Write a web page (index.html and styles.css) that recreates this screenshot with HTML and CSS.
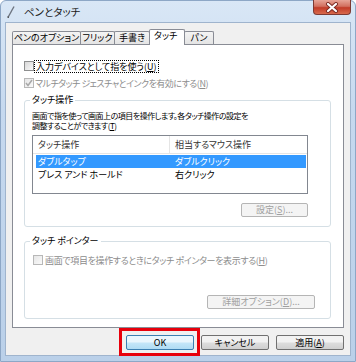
FILE: index.html
```html
<!DOCTYPE html>
<html lang="ja">
<head>
  <meta charset="UTF-8">
  <title>ペンとタッチ</title>
  <link rel="stylesheet" href="styles.css">
</head>
<body>
  <div class="window">
    <div class="titlebar">
      <svg class="pen-icon" width="8" height="12" viewBox="0 0 8 12">
        <path d="M7 0.5 L1.5 10.5" stroke="#6d7480" stroke-width="1.4" fill="none"/>
        <path d="M1.5 10.5 L0.8 11.6" stroke="#222" stroke-width="1.4" fill="none"/>
      </svg>
      <span class="title">ペンとタッチ</span>
      <div class="close-btn">
        <svg width="14" height="11" viewBox="0 0 14 11">
          <path d="M3 2 L11 9 M11 2 L3 9" stroke="#7a2a22" stroke-width="4" stroke-linecap="round"/>
          <path d="M3 2 L11 9 M11 2 L3 9" stroke="#fff" stroke-width="2.2" stroke-linecap="round"/>
        </svg>
      </div>
    </div>

    <div class="client">
      <div class="tabs">
        <div class="tab tab-options">ペンのオプション</div>
        <div class="tab tab-flick">フリック</div>
        <div class="tab tab-hand">手書き</div>
        <div class="tab tab-touch active">タッチ</div>
        <div class="tab tab-pan">パン</div>
      </div>

      <div class="panel">
        <div class="check-row">
          <span class="checkbox"></span>
          <span class="focus-label">入力デバイスとして指を使う(<u>U</u>)</span>
        </div>
        <div class="check-row disabled multi">
          <span class="checkbox checked">
            <svg width="8" height="8" viewBox="0 0 8 8"><path d="M1 4 L3 6.5 L7 1" stroke="#a8a8a8" stroke-width="1.5" fill="none"/></svg>
          </span>
          <span>マルチタッチ ジェスチャとインクを有効にする(<u>N</u>)</span>
        </div>

        <fieldset class="group group-ops">
          <legend>タッチ操作</legend>
          <p class="desc">画面で指を使って画面上の項目を操作します。各タッチ操作の設定を<br>調整することができます(<u>T</u>)</p>
          <div class="listbox">
            <div class="list-head"><span>タッチ操作</span><span>相当するマウス操作</span></div>
            <div class="list-row selected"><span>ダブルタップ</span><span>ダブルクリック</span></div>
            <div class="list-row"><span>プレス アンド ホールド</span><span>右クリック</span></div>
          </div>
          <div class="btn-row">
            <button class="btn btn-settings" disabled>設定(<u>S</u>)...</button>
          </div>
        </fieldset>

        <fieldset class="group group-pointer">
          <legend>タッチ ポインター</legend>
          <div class="check-row disabled">
            <span class="checkbox"></span>
            <span>画面で項目を操作するときにタッチ ポインターを表示する(<u>H</u>)</span>
          </div>
          <div class="btn-row">
            <button class="btn btn-advanced" disabled>詳細オプション(<u>D</u>)...</button>
          </div>
        </fieldset>
      </div>

      <div class="dialog-buttons">
        <div class="ok-frame">
          <button class="btn btn-dialog btn-default">OK</button>
        </div>
        <button class="btn btn-dialog">キャンセル</button>
        <button class="btn btn-dialog">適用(<u>A</u>)</button>
      </div>
    </div>
  </div>
</body>
</html>
```

FILE: styles.css
```css
body {
  margin: 0;
  background: #fff;
  font-family: "Noto Sans CJK JP", "Noto Sans", sans-serif;
  font-size: 9px;
  font-feature-settings: "palt";
  color: #000;
}

.window {
  width: 356px;
  height: 362px;
  box-sizing: border-box;
  border: 1px solid #8da7c6;
  border-radius: 6px 6px 0 0;
  padding: 0 4px 5px;
  background: linear-gradient(to bottom, #d9e7f6, #c6d9ef 30%, #bad0e9);
  display: flex;
  flex-direction: column;
}

.titlebar {
  height: 21px;
  display: flex;
  align-items: flex-start;
}

.pen-icon {
  margin: 5px 0 0 2px;
}

.title {
  margin-left: 9px;
  font-size: 10.5px;
  line-height: 21px;
  color: #1a1a1a;
}

.close-btn {
  margin-left: auto;
  margin-top: -1px;
  width: 38px;
  height: 15px;
  box-sizing: border-box;
  border: 1px solid #7d3a33;
  border-top: none;
  border-radius: 0 0 4px 4px;
  background: linear-gradient(to bottom, #e7a597, #d2705f 45%, #c23c28 55%, #d86a4d);
  display: flex;
  align-items: center;
  justify-content: center;
}

.client {
  flex: 1;
  border: 1px solid #9fb4cd;
  background: #f0f0f0;
  padding: 6px 6px 5px;
  display: flex;
  flex-direction: column;
}

/* tabs */
.tabs {
  display: flex;
  align-items: flex-end;
  height: 15px;
}

.tab {
  height: 13px;
  box-sizing: border-box;
  padding: 0;
  border: 1px solid #898c95;
  border-bottom: none;
  border-radius: 2px 2px 0 0;
  margin-right: -1px;
  background: linear-gradient(to bottom, #f4f4f4, #e4e4e4);
  line-height: 11px;
  text-align: center;
  white-space: nowrap;
}

.tab-options { width: 69px; }
.tab-flick { width: 35px; }
.tab-hand { width: 36px; }
.tab-touch { width: 36px; }
.tab-pan { width: 30px; }

.tab.active {
  height: 16px;
  margin-bottom: -1px;
  background: #fff;
  position: relative;
  z-index: 1;
  text-align: left;
  padding-left: 4px;
}

.panel {
  height: 284px;
  box-sizing: border-box;
  border: 1px solid #898c95;
  background: #fff;
  padding: 15px 12px 0 11px;
}

.check-row {
  display: flex;
  align-items: center;
  height: 12px;
  gap: 1px;
  white-space: nowrap;
}

.check-row + .check-row {
  margin-top: 5px;
}

.check-row.multi {
  letter-spacing: -0.5px;
}

.checkbox {
  width: 10px;
  height: 10px;
  box-sizing: border-box;
  border: 1px solid #8e8f8f;
  background: linear-gradient(135deg, #d8d8d8, #f8f8f8);
  display: flex;
  align-items: center;
  justify-content: center;
}

.disabled {
  color: #8d8d8d;
}

.disabled .checkbox {
  border-color: #b8b8b8;
  background: linear-gradient(135deg, #e6e6e6, #fafafa);
}

.focus-label {
  outline: 1px dotted #000;
  padding: 0 1px;
  line-height: 11px;
}

/* group boxes */
.group {
  margin: 5px 0 0;
  padding: 5px 22px 9px 7px;
  border: 1px solid #d5dfe5;
  border-radius: 3px;
  min-width: 0;
}

.group legend {
  padding: 0 2px;
  margin-left: -2px;
  line-height: 12px;
}

.desc {
  margin: 0;
  font-size: 8px;
  letter-spacing: -0.5px;
  line-height: 10px;
  white-space: nowrap;
}

.listbox {
  margin-top: 4px;
  height: 59px;
  box-sizing: border-box;
  border: 1px solid #828790;
  background: #fff;
}

.list-head {
  display: flex;
  height: 18px;
  box-sizing: border-box;
  border-bottom: 1px solid #e5e5e5;
  color: #333;
}

.list-head span {
  padding-left: 5px;
  line-height: 17px;
}

.list-head span:first-child {
  width: 137px;
  box-sizing: border-box;
  border-right: 1px solid #e5e5e5;
}

.list-row {
  display: flex;
  height: 13px;
  margin: 0 1px 0 3px;
  padding-left: 2px;
  line-height: 13px;
}

.list-head + .list-row {
  margin-top: 1px;
}

.list-row span:first-child {
  width: 137px;
}

.list-row.selected {
  background: #3399ff;
  color: #fff;
}

.btn-row {
  display: flex;
  justify-content: flex-end;
  margin-top: 9px;
}

.btn {
  height: 14px;
  padding: 0;
  font: inherit;
  font-feature-settings: "palt";
  line-height: 12px;
  color: #000;
  border: 1px solid #707070;
  border-radius: 2px;
  background: linear-gradient(to bottom, #f2f2f2 45%, #dddddd 55%, #d0d0d0);
}

.btn:disabled {
  color: #a0a0a0;
  border-color: #b5b5b5;
  background: #f4f4f4;
}

.btn-settings {
  width: 67px;
}

.group-pointer {
  margin-top: 8px;
  padding: 7px 15px 9px 7px;
}

.group-pointer .check-row {
  margin-left: 1px;
  gap: 2px;
  letter-spacing: -0.35px;
}

.group-pointer .btn-row {
  margin-top: 29px;
}

.btn-advanced {
  width: 108px;
}

/* dialog buttons */
.dialog-buttons {
  display: flex;
  justify-content: flex-end;
  gap: 7px;
  margin-top: 7px;
}

.btn-dialog {
  width: 68px;
  height: 15px;
}

.btn-default {
  border-color: #3c7fb1;
  background: linear-gradient(to bottom, #eaf6fd 45%, #c4e6f8 55%, #b0dcf4);
}

.ok-frame {
  display: flex;
  border: 3px solid #e8000b;
  padding: 4px 3px 3px 4px;
  margin: -7px -6px -6px -7px;
}
```
